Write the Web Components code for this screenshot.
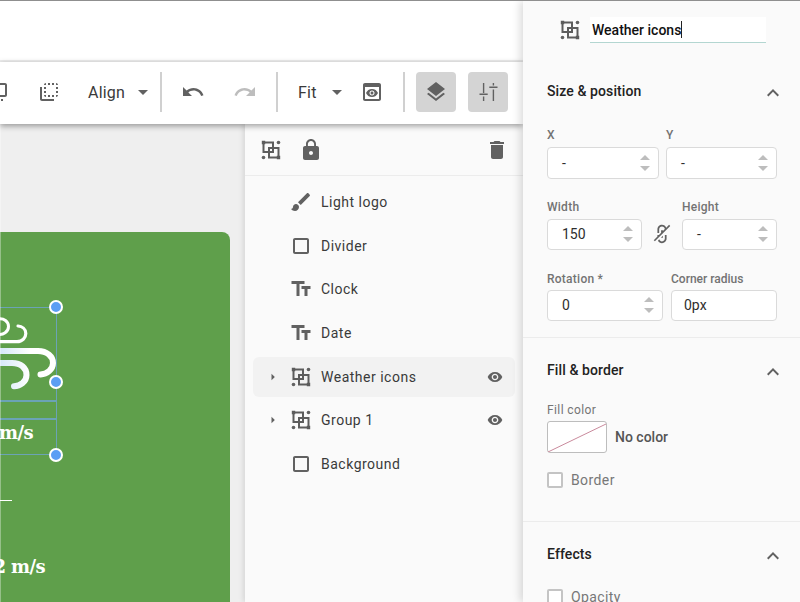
<!DOCTYPE html>
<html>
<head>
<meta charset="utf-8">
<title>Editor</title>
<style>
  html, body { margin: 0; height: 602px; overflow: hidden; background: #fff; }
  body { font-family: Roboto, "Liberation Sans", sans-serif; color: #333; }
</style>
</head>
<body>
<app-shell></app-shell>
<script>
const ICONS = {
  front: '<path d="M3 13h2v-2H3v2zm0 4h2v-2H3v2zm2 4v-2H3c0 1.1.89 2 2 2zM3 9h2V7H3v2zm12 12h2v-2h-2v2zm4-18H9c-1.11 0-2 .9-2 2v10c0 1.1.89 2 2 2h10c1.1 0 2-.9 2-2V5c0-1.1-.9-2-2-2zm0 12H9V5h10v10zm-8 6h2v-2h-2v2zm-4 0h2v-2H7v2z"/>',
  back: '<path d="M9 7H7v2h2V7zm0 4H7v2h2v-2zm0-8c-1.11 0-2 .9-2 2h2V3zm4 12h-2v2h2v-2zm6-12v2h2c0-1.1-.9-2-2-2zm-6 0h-2v2h2V3zM9 17v-2H7c0 1.1.89 2 2 2zm10-4h2v-2h-2v2zm0-4h2V7h-2v2zm0 8c1.1 0 2-.9 2-2h-2v2zM5 7H3v12c0 1.1.89 2 2 2h12v-2H5V7zm10-2h2V3h-2v2zm0 12h2v-2h-2v2z"/>',
  drop: '<path d="M7 10l5 5 5-5z"/>',
  right: '<path d="M10.5 8.7l3.3 3.3-3.3 3.3z"/>',
  undo: '<path d="M12.5 8c-2.65 0-5.05.99-6.9 2.6L2 7v9h9l-3.62-3.62c1.39-1.16 3.16-1.88 5.12-1.88 3.54 0 6.55 2.31 7.6 5.5l2.37-.78C21.08 11.03 17.15 8 12.5 8z"/>',
  redo: '<path d="M18.4 10.6C16.55 8.99 14.15 8 11.5 8c-4.65 0-8.58 3.03-9.96 7.22L3.9 16c1.05-3.19 4.05-5.5 7.6-5.5 1.95 0 3.73.72 5.12 1.88L13 16h9V7l-3.6 3.6z"/>',
  preview: '<path d="M19 3H5c-1.11 0-2 .9-2 2v14c0 1.1.89 2 2 2h14c1.1 0 2-.9 2-2V5c0-1.1-.89-2-2-2zm0 16H5V7h14v12zm-5.5-6c0 .83-.67 1.5-1.5 1.5s-1.5-.67-1.5-1.5.67-1.5 1.5-1.5 1.5.67 1.5 1.5zM12 9c-2.73 0-5.06 1.66-6 4 .94 2.34 3.27 4 6 4s5.06-1.66 6-4c-.94-2.34-3.27-4-6-4zm0 6.5c-1.38 0-2.5-1.12-2.5-2.5s1.12-2.5 2.5-2.5 2.5 1.12 2.5 2.5-1.12 2.5-2.5 2.5z"/>',
  layers: '<path d="M11.99 18.54l-7.37-5.73L3 14.07l9 7 9-7-1.63-1.27-7.38 5.74zM12 16l7.36-5.73L21 9l-9-7-9 7 1.63 1.27L12 16z"/>',
  sliders: '<path d="M7.4 3h1.4v10H7.4zM7.4 16.5h1.4V21H7.4zM4 13.5h8.2v1.6H4zM17.2 3h1.4v2.5h-1.4zM17.2 9.5h1.4V21h-1.4zM13.8 6.5H22v1.6h-8.2z" transform="translate(-.5 0)"/>',
  lock: '<path d="M18 8h-1V6c0-2.76-2.24-5-5-5S7 3.24 7 6v2H6c-1.1 0-2 .9-2 2v10c0 1.1.9 2 2 2h12c1.1 0 2-.9 2-2V10c0-1.1-.9-2-2-2zm-6 9c-1.1 0-2-.9-2-2s.9-2 2-2 2 .9 2 2-.9 2-2 2zm3.1-9H8.9V6c0-1.71 1.39-3.1 3.1-3.1 1.71 0 3.1 1.39 3.1 3.1v2z"/>',
  trash: '<path d="M6 19c0 1.1.9 2 2 2h8c1.1 0 2-.9 2-2V7H6v12zM19 4h-3.5l-1-1h-5l-1 1H5v2h14V4z"/>',
  brush: '<path d="M7 14c-1.66 0-3 1.34-3 3 0 1.31-1.16 2-2 2 .92 1.22 2.49 2 4 2 2.21 0 4-1.79 4-4 0-1.66-1.34-3-3-3zm13.71-9.37l-1.34-1.34c-.39-.39-1.02-.39-1.41 0L9 12.25 11.75 15l8.96-8.96c.39-.39.39-1.03 0-1.41z"/>',
  square: '<path d="M18 4H6c-1.1 0-2 .9-2 2v12c0 1.1.9 2 2 2h12c1.1 0 2-.9 2-2V6c0-1.1-.9-2-2-2zm0 14H6V6h12v12z"/>',
  text: '<path d="M2.5 4v3h5v12h3V7h5V4h-13zm19 5h-9v3h3v7h3v-7h3V9z"/>',
  eye: '<path d="M12 4.5C7 4.5 2.73 7.61 1 12c1.73 4.39 6 7.5 11 7.5s9.27-3.11 11-7.5c-1.73-4.39-6-7.5-11-7.5zM12 17c-2.76 0-5-2.24-5-5s2.24-5 5-5 5 2.24 5 5-2.24 5-5 5zm0-8c-1.66 0-3 1.34-3 3s1.34 3 3 3 3-1.34 3-3-1.34-3-3-3z"/>',
  chevron: '<path d="M7.41 15.41L12 10.83l4.59 4.58L18 14l-6-6-6 6z"/>',
  linkoff: '<path transform="rotate(90 12 12)" d="M17 7h-4v1.9h4c1.71 0 3.1 1.39 3.1 3.1 0 1.43-.98 2.63-2.31 2.98l1.46 1.46C20.88 15.61 22 13.95 22 12c0-2.76-2.24-5-5-5zm-1 4h-2.19l2 2H16zM2 4.27l3.11 3.11C3.29 8.12 2 9.91 2 12c0 2.76 2.24 5 5 5h4v-1.9H7c-1.71 0-3.1-1.39-3.1-3.1 0-1.59 1.21-2.9 2.76-3.07L8.73 11H8v2h2.73L13 15.27V17h1.73l4.01 4L20 19.74 3.27 3 2 4.27z"/>',
  group: '<path fill="none" stroke="#5c5c5c" stroke-width="2" d="M4.5 4.5h9.5v9.5H4.5zM10 10h9.5v9.5H10z"/><path fill="#5c5c5c" d="M2.8 2.8h3.4v3.4H2.8zM17.8 17.8h3.4v3.4h-3.4z"/><circle cx="19.5" cy="4.5" r="1.8"/><circle cx="4.5" cy="19.5" r="1.8"/>'
};

class UiIcon extends HTMLElement {
  connectedCallback() {
    const size = this.getAttribute('size') || 24;
    const color = this.getAttribute('color') || '#616161';
    this.attachShadow({ mode: 'open' }).innerHTML = `
      <style>
        :host { display: block; width: ${size}px; height: ${size}px; flex: none; line-height: 0; }
        svg { width: 100%; height: 100%; fill: ${color}; }
      </style>
      <svg viewBox="0 0 24 24">${ICONS[this.getAttribute('name')] || ''}</svg>`;
  }
}

class AppShell extends HTMLElement {
  connectedCallback() {
    this.attachShadow({ mode: 'open' }).innerHTML = `
      <style>
        :host { display: grid; grid-template-columns: 523px 277px; height: 601px; border-top: 1px solid #8f8f8f; overflow: hidden; }
        .main { display: flex; flex-direction: column; min-width: 0; height: 601px; }
        .top { height: 59px; flex: none; background: #fff; border-bottom: 2px solid #eeeeee; }
        .work { display: flex; flex: 1; min-height: 0; }
      </style>
      <div class="main">
        <div class="top"></div>
        <design-toolbar></design-toolbar>
        <div class="work">
          <design-canvas></design-canvas>
          <layer-panel></layer-panel>
        </div>
      </div>
      <prop-panel></prop-panel>`;
  }
}

class DesignToolbar extends HTMLElement {
  connectedCallback() {
    this.attachShadow({ mode: 'open' }).innerHTML = `
      <style>
        :host { display: flex; align-items: center; height: 62px; box-sizing: border-box; padding-bottom: 2px; flex: none; background: #fff; position: relative; z-index: 2; box-shadow: 0 2px 6px rgba(0,0,0,.38); }
        .bar { display: flex; align-items: center; margin-left: -14px; }
        .lbl { font-size: 16px; letter-spacing: .2px; color: #3a3a3a; }
        .div { width: 2px; height: 40px; background: #d0d0d0; }
        .on { width: 40px; height: 40px; border-radius: 4px; background: #d4d4d4; display: flex; align-items: center; justify-content: center; }
      </style>
      <div class="bar">
        <ui-icon name="front"></ui-icon>
        <ui-icon name="back" style="margin-left:27px"></ui-icon>
        <span class="lbl" style="margin-left:27px;width:37px">Align</span>
        <ui-icon name="drop" style="margin-left:6px"></ui-icon>
        <span class="div" style="margin-left:5px"></span>
        <ui-icon name="undo" style="margin-left:19px"></ui-icon>
        <ui-icon name="redo" color="#bdbdbd" style="margin-left:28px"></ui-icon>
        <span class="div" style="margin-left:19px"></span>
        <span class="lbl" style="margin-left:20px;width:26px">Fit</span>
        <ui-icon name="drop" style="margin-left:1px"></ui-icon>
        <ui-icon name="preview" style="margin-left:11px"></ui-icon>
        <span class="div" style="margin-left:19px"></span>
        <span class="on" style="margin-left:11px"><ui-icon name="layers"></ui-icon></span>
        <span class="on" style="margin-left:12px"><ui-icon name="sliders"></ui-icon></span>
      </div>`;
  }
}

class DesignCanvas extends HTMLElement {
  connectedCallback() {
    this.attachShadow({ mode: 'open' }).innerHTML = `
      <style>
        :host { display: block; position: relative; width: 245px; flex: none; background: #efefef; overflow: hidden; }
        .card { position: absolute; left: -100px; top: 108px; width: 330px; height: 420px; background: #5f9f4b; border-radius: 8px; }
        .edge { position: absolute; left: 0; top: 0; bottom: 0; width: 1px; background: rgba(255,255,255,.35); }
        svg { position: absolute; left: 100px; top: 68px; width: 60px; height: 100px; overflow: visible; }
        .sel { position: absolute; left: 0; top: 75px; width: 157px; height: 148px; border: solid #6ba3b5; border-width: 1.5px 1.5px 1.5px 0; box-sizing: border-box; }
        .ln { position: absolute; left: 0; width: 157px; height: 1.5px; background: #6ba3b5; }
        .h { position: absolute; left: 149px; width: 10px; height: 10px; border: 2px solid #fff; border-radius: 50%; background: #5b9ef4; }
        .t { position: absolute; font: bold 18px "DejaVu Serif", "Liberation Serif", serif; letter-spacing: -.6px; color: #fff; white-space: nowrap; }
        .dash { position: absolute; left: 60px; top: 267.5px; width: 52px; height: 1.5px; background: #fff; }
      </style>
      <div class="card">
        <svg viewBox="0 300 60 100" fill="none" stroke-linecap="round">
          <defs>
            <linearGradient id="w" gradientUnits="userSpaceOnUse" x1="0" y1="0" x2="30" y2="0">
              <stop offset="0" stop-color="#d6e8fa"/><stop offset="1" stop-color="#fff"/>
            </linearGradient>
          </defs>
          <path d="M-2 319C4 318 8.5 321.5 8.5 326.5C8.5 332 3 335 -2 334.5" stroke="#fff" stroke-width="3"/>
          <path d="M-2 341.7H17C22.5 341.7 25.8 337.5 25.8 333.5C25.8 329 22 326.3 18 326" stroke="#fff" stroke-width="3.2"/>
          <path d="M-2 351H38C47 351 53 356.5 53 363C53 369.5 47 374 40.5 374.5" stroke="url(#w)" stroke-width="6"/>
          <path d="M-2 363H12C21 363 26.5 368 26.5 375C26.5 382 20 386 14 386.2" stroke="url(#w)" stroke-width="6"/>
        </svg>
        <div class="sel"></div>
        <div class="ln" style="top:168px"></div>
        <div class="ln" style="top:186px"></div>
        <div class="t" style="right:197px;top:190px">m/s</div>
        <div class="dash"></div>
        <div class="t" style="right:185px;top:324px">2 m/s</div>
        <div class="h" style="top:68px"></div>
        <div class="h" style="top:143px"></div>
        <div class="h" style="top:216px"></div>
      </div>
      <div class="edge"></div>`;
  }
}

class LayerRow extends HTMLElement {
  connectedCallback() {
    const expand = this.hasAttribute('expand');
    this.attachShadow({ mode: 'open' }).innerHTML = `
      <style>
        :host { display: flex; align-items: center; height: 40px; padding: 0 8px; border-radius: 6px; font-size: 14px; letter-spacing: .5px; color: #3a3a3a; }
        :host([selected]) { background: #f2f2f2; }
        .arrow { width: 24px; height: 24px; flex: none; }
        .label { flex: 1; margin-left: 8px; }
      </style>
      <span class="arrow">${expand ? '<ui-icon name="right" size="24"></ui-icon>' : ''}</span>
      <ui-icon name="${this.getAttribute('icon')}" style="margin-left:4px"></ui-icon>
      <span class="label"><slot></slot></span>
      ${expand ? '<ui-icon name="eye" size="16" style="margin-right:4px"></ui-icon>' : ''}`;
  }
}

class LayerPanel extends HTMLElement {
  connectedCallback() {
    this.attachShadow({ mode: 'open' }).innerHTML = `
      <style>
        :host { display: flex; flex-direction: column; flex: 1; min-width: 0; background: #fafafa; position: relative; z-index: 1; box-shadow: -2px 0 5px rgba(0,0,0,.1); }
        .head { display: flex; align-items: center; height: 52px; flex: none; box-sizing: border-box; border-bottom: 1px solid #ececec; padding: 0 14px 0 14px; }
        .list { display: flex; flex-direction: column; gap: 3.7px; padding: 6px 8px 0; }
      </style>
      <div class="head">
        <ui-icon name="group"></ui-icon>
        <ui-icon name="lock" style="margin-left:16px"></ui-icon>
        <ui-icon name="trash" style="margin-left:auto"></ui-icon>
      </div>
      <div class="list">
        <layer-row icon="brush">Light logo</layer-row>
        <layer-row icon="square">Divider</layer-row>
        <layer-row icon="text">Clock</layer-row>
        <layer-row icon="text">Date</layer-row>
        <layer-row icon="group" expand selected>Weather icons</layer-row>
        <layer-row icon="group" expand>Group 1</layer-row>
        <layer-row icon="square">Background</layer-row>
      </div>`;
  }
}

class PropSection extends HTMLElement {
  connectedCallback() {
    this.attachShadow({ mode: 'open' }).innerHTML = `
      <style>
        :host { display: block; padding: var(--top, 22px) 23px var(--bottom, 33px) 24px; border-bottom: 1px solid #ececec; }
        .head { display: flex; justify-content: space-between; align-items: flex-start; height: 20px; margin-bottom: var(--gap, 23px); }
        h2 { margin: 0; font-size: 14px; line-height: 20px; font-weight: 500; letter-spacing: .1px; color: #222; }
        ui-icon { margin-right: -8px; }
      </style>
      <div class="head"><h2>${this.getAttribute('heading')}</h2><ui-icon name="chevron"></ui-icon></div>
      <slot></slot>`;
  }
}

class NumField extends HTMLElement {
  connectedCallback() {
    const spin = !this.hasAttribute('nospin');
    this.attachShadow({ mode: 'open' }).innerHTML = `
      <style>
        :host { display: block; min-width: 0; }
        label { display: block; font-size: 12px; line-height: 14px; font-weight: 500; letter-spacing: var(--label-ls, .25px); color: #737373; margin-bottom: var(--label-gap, 5px); white-space: nowrap; }
        .box { display: flex; align-items: center; justify-content: space-between; height: 31.5px; box-sizing: border-box; background: #fff; border: 1px solid #dadada; border-radius: 4px; padding: 0 8.5px 0 var(--inset, 14px); font-size: 14px; color: #2e2e2e; }
        .spin { display: flex; flex-direction: column; gap: 6px; }
        .spin i { display: block; width: 0; height: 0; border-left: 5.5px solid transparent; border-right: 5.5px solid transparent; }
        .up { border-bottom: 5.5px solid #bdbdbd; }
        .dn { border-top: 5.5px solid #bdbdbd; }
      </style>
      <label>${this.getAttribute('label')}</label>
      <div class="box"><span><slot></slot></span>${spin ? '<span class="spin"><i class="up"></i><i class="dn"></i></span>' : ''}</div>`;
  }
}

class CheckField extends HTMLElement {
  connectedCallback() {
    this.attachShadow({ mode: 'open' }).innerHTML = `
      <style>
        :host { display: flex; align-items: center; gap: 8px; height: 16px; font-size: 14px; letter-spacing: .4px; color: #777; }
        i { display: block; width: 16px; height: 16px; box-sizing: border-box; border: 2px solid #c4c4c4; border-radius: 2px; background: #fff; }
      </style>
      <i></i><span><slot></slot></span>`;
  }
}

class PropPanel extends HTMLElement {
  connectedCallback() {
    this.attachShadow({ mode: 'open' }).innerHTML = `
      <style>
        :host { display: block; background: #fafafa; position: relative; z-index: 3; box-shadow: -3px 0 8px rgba(0,0,0,.14); overflow: hidden; height: 601px; }
        .name { display: flex; align-items: center; padding: 16px 0 0 35px; }
        .input { width: 176px; height: 26px; margin-left: 8px; box-sizing: border-box; background: #fff; border-bottom: 1.5px solid #b3d6d1; padding-left: 2px; display: flex; align-items: center; font-size: 14px; font-weight: 500; color: #111; }
        .caret { width: 1px; height: 17px; background: #222; }
        .row { display: flex; margin-bottom: 21px; }
        .row:last-child { margin-bottom: 0; }
        .link { width: 40px; flex: none; display: flex; align-items: flex-end; justify-content: center; padding-bottom: 5px; }
        .fill-label { font-size: 12px; line-height: 14px; letter-spacing: .4px; color: #757575; margin-bottom: 4px; }
        .fill { display: flex; align-items: center; gap: 8px; margin-bottom: 19px; font-size: 14px; font-weight: 500; color: #555; }
        .swatch { width: 60px; height: 32px; box-sizing: border-box; border: 1px solid #bdbdbd; border-radius: 3px; background: #fff; display: block; }
        .swatch svg { width: 100%; height: 100%; display: block; }
      </style>
      <div class="name">
        <ui-icon name="group"></ui-icon>
        <div class="input"><span>Weather icons</span><span class="caret"></span></div>
      </div>
      <prop-section heading="Size &amp; position" style="--top:38px;--bottom:15.5px;--gap:27px">
        <div class="row" style="gap:7px">
          <num-field label="X" style="width:112px">-</num-field>
          <num-field label="Y" style="width:111px">-</num-field>
        </div>
        <div class="row" style="margin-bottom:21.5px">
          <num-field label="Width" style="width:95px">150</num-field>
          <div class="link"><ui-icon name="linkoff" size="22"></ui-icon></div>
          <num-field label="Height" style="width:95px">-</num-field>
        </div>
        <div class="row" style="gap:8px;--label-gap:4px">
          <num-field label="Rotation *" style="width:116px">0</num-field>
          <num-field label="Corner radius" nospin style="width:106px;--inset:12px;--label-ls:0">0px</num-field>
        </div>
      </prop-section>
      <prop-section heading="Fill &amp; border">
        <div class="fill-label">Fill color</div>
        <div class="fill">
          <span class="swatch"><svg viewBox="0 0 58 30" preserveAspectRatio="none"><line x1="0" y1="30" x2="58" y2="2" stroke="#c98a9c" stroke-width="1"/></svg></span>
          <span>No color</span>
        </div>
        <check-field>Border</check-field>
      </prop-section>
      <prop-section heading="Effects" style="--gap:25px">
        <check-field>Opacity</check-field>
      </prop-section>`;
  }
}

customElements.define('ui-icon', UiIcon);
customElements.define('design-toolbar', DesignToolbar);
customElements.define('design-canvas', DesignCanvas);
customElements.define('layer-row', LayerRow);
customElements.define('layer-panel', LayerPanel);
customElements.define('prop-section', PropSection);
customElements.define('num-field', NumField);
customElements.define('check-field', CheckField);
customElements.define('prop-panel', PropPanel);
customElements.define('app-shell', AppShell);
</script>
</body>
</html>
